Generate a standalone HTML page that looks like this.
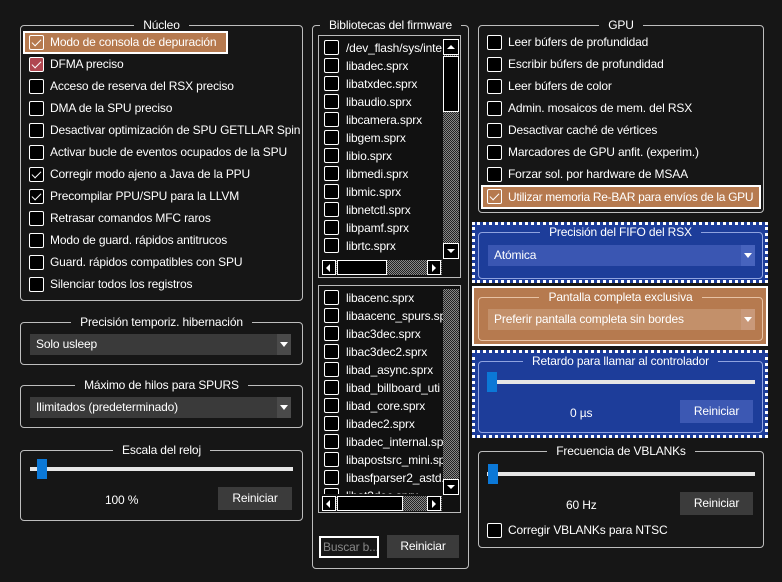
<!DOCTYPE html><html><head><meta charset="utf-8"><style>
*{box-sizing:border-box;margin:0;padding:0}
body{width:782px;height:582px;background:#161616;font-family:"Liberation Sans",sans-serif;font-size:12px;letter-spacing:-0.15px;color:#fff;position:relative;overflow:hidden}
.a{position:absolute}
.g{position:absolute;border:1px solid #bdbdbd;border-radius:4px}
.t{position:absolute;top:-10px;left:0;right:0;text-align:center;line-height:18px;white-space:nowrap}
.t span{background:#161616;padding:0 9px}
.cb{position:absolute;width:15px;height:15px;border:1px solid #fff;background:#000;border-radius:2px}
.lb{position:absolute;white-space:nowrap;line-height:18px}
.ck::after{content:"";position:absolute;left:4px;top:1px;width:4px;height:8px;border:solid #fff;border-width:0 1.5px 1.5px 0;transform:rotate(45deg)}
.combo{position:absolute;background:#3a3a3a;height:21px;line-height:21px;padding-left:6px;white-space:nowrap}
.combo i{position:absolute;right:0;top:0;width:14px;height:21px;background:#4a4a4a}
.combo i::after{content:"";position:absolute;left:3px;top:8px;border:4px solid transparent;border-top:5px solid #fff}
.btn{position:absolute;background:#3b3b3b;text-align:center;line-height:23px;height:23px}
.trk{position:absolute;height:4px;background:#e6e6e6}
.hd{position:absolute;width:10px;height:20px;background:#0b78d7}
.dot{position:absolute;border:3px dotted #fff}
.li{position:absolute;left:5px;height:18px;white-space:nowrap;line-height:18px}
.li b{display:inline-block;width:15px;height:15px;border:1px solid #fff;background:#000;vertical-align:-3px;margin-right:7px;border-radius:2px}
.chk{background:repeating-conic-gradient(#888 0 25%,#222 0 50%) 0 0/2px 2px}
.sb{position:absolute;background:#000;border:1px solid #fff}
</style></head><body>

<div class="g" style="left:20px;top:25px;width:283px;height:276px"><div class="t"><span>Núcleo</span></div></div>
<div class="a" style="left:23px;top:31px;width:205px;height:23px;background:#b67a4f;border:2px solid #fff"></div>
<div class="cb ck" style="left:29px;top:35px;background:#b67a4f"></div><div class="lb" style="left:50px;top:33px">Modo de consola de depuración</div>
<div class="cb ck" style="left:29px;top:57px;background:#b04650"></div><div class="lb" style="left:50px;top:55px">DFMA preciso</div>
<div class="cb" style="left:29px;top:79px"></div><div class="lb" style="left:50px;top:77px">Acceso de reserva del RSX preciso</div>
<div class="cb" style="left:29px;top:101px"></div><div class="lb" style="left:50px;top:99px">DMA de la SPU preciso</div>
<div class="cb" style="left:29px;top:123px"></div><div class="lb" style="left:50px;top:121px">Desactivar optimización de SPU GETLLAR Spin</div>
<div class="cb" style="left:29px;top:145px"></div><div class="lb" style="left:50px;top:143px">Activar bucle de eventos ocupados de la SPU</div>
<div class="cb ck" style="left:29px;top:167px"></div><div class="lb" style="left:50px;top:165px">Corregir modo ajeno a Java de la PPU</div>
<div class="cb ck" style="left:29px;top:189px"></div><div class="lb" style="left:50px;top:187px">Precompilar PPU/SPU para la LLVM</div>
<div class="cb" style="left:29px;top:211px"></div><div class="lb" style="left:50px;top:209px">Retrasar comandos MFC raros</div>
<div class="cb" style="left:29px;top:233px"></div><div class="lb" style="left:50px;top:231px">Modo de guard. rápidos antitrucos</div>
<div class="cb" style="left:29px;top:255px"></div><div class="lb" style="left:50px;top:253px">Guard. rápidos compatibles con SPU</div>
<div class="cb" style="left:29px;top:277px"></div><div class="lb" style="left:50px;top:275px">Silenciar todos los registros</div>

<div class="g" style="left:20px;top:322px;width:283px;height:43px"><div class="t"><span>Precisión temporiz. hibernación</span></div></div>
<div class="combo" style="left:30px;top:334px;width:261px">Solo usleep<i></i></div>
<div class="g" style="left:20px;top:385px;width:283px;height:43px"><div class="t"><span>Máximo de hilos para SPURS</span></div></div>
<div class="combo" style="left:30px;top:397px;width:261px">Ilimitados (predeterminado)<i></i></div>
<div class="g" style="left:20px;top:450px;width:283px;height:71px"><div class="t"><span>Escala del reloj</span></div></div>
<div class="trk" style="left:30px;top:467px;width:263px"></div><div class="hd" style="left:37px;top:459px"></div>
<div class="lb" style="left:105px;top:491px">100 %</div>
<div class="btn" style="left:218px;top:487px;width:74px">Reiniciar</div>

<div class="g" style="left:312px;top:25px;width:157px;height:544px"><div class="t"><span>Bibliotecas del firmware</span></div></div>
<div class="a" style="left:318px;top:35px;width:143px;height:243px;border:1px solid #bbb;background:#111;overflow:hidden">
<div class="li" style="top:3px"><b></b>/dev_flash/sys/inte</div>
<div class="li" style="top:21px"><b></b>libadec.sprx</div>
<div class="li" style="top:39px"><b></b>libatxdec.sprx</div>
<div class="li" style="top:57px"><b></b>libaudio.sprx</div>
<div class="li" style="top:75px"><b></b>libcamera.sprx</div>
<div class="li" style="top:93px"><b></b>libgem.sprx</div>
<div class="li" style="top:111px"><b></b>libio.sprx</div>
<div class="li" style="top:129px"><b></b>libmedi.sprx</div>
<div class="li" style="top:147px"><b></b>libmic.sprx</div>
<div class="li" style="top:165px"><b></b>libnetctl.sprx</div>
<div class="li" style="top:183px"><b></b>libpamf.sprx</div>
<div class="li" style="top:201px"><b></b>librtc.sprx</div>
<div class="a chk" style="left:124px;top:3px;width:16px;height:220px"></div>
<div class="sb" style="left:124px;top:3px;width:16px;height:16px"></div><div class="a" style="left:128px;top:9px;border:4px solid transparent;border-bottom:4px solid #fff;border-top:0"></div>
<div class="sb" style="left:124px;top:20px;width:16px;height:56px"></div>
<div class="sb" style="left:124px;top:207px;width:16px;height:16px"></div><div class="a" style="left:128px;top:213px;border:4px solid transparent;border-top:4px solid #fff;border-bottom:0"></div>
<div class="a" style="left:0;top:222px;width:124px;height:20px;background:#111"></div>
<div class="a chk" style="left:3px;top:224px;width:120px;height:15px"></div>
<div class="sb" style="left:3px;top:224px;width:14px;height:15px"></div><div class="a" style="left:7px;top:228px;border:4px solid transparent;border-right:4px solid #fff;border-left:0"></div>
<div class="sb" style="left:18px;top:224px;width:50px;height:15px"></div>
<div class="sb" style="left:108px;top:224px;width:14px;height:15px"></div><div class="a" style="left:113px;top:228px;border:4px solid transparent;border-left:4px solid #fff;border-right:0"></div>
</div>
<div class="a" style="left:318px;top:285px;width:143px;height:228px;border:1px solid #bbb;background:#111;overflow:hidden">
<div class="li" style="top:3px"><b></b>libacenc.sprx</div>
<div class="li" style="top:21px"><b></b>libaacenc_spurs.sp</div>
<div class="li" style="top:39px"><b></b>libac3dec.sprx</div>
<div class="li" style="top:57px"><b></b>libac3dec2.sprx</div>
<div class="li" style="top:75px"><b></b>libad_async.sprx</div>
<div class="li" style="top:93px"><b></b>libad_billboard_uti</div>
<div class="li" style="top:111px"><b></b>libad_core.sprx</div>
<div class="li" style="top:129px"><b></b>libadec2.sprx</div>
<div class="li" style="top:147px"><b></b>libadec_internal.sp</div>
<div class="li" style="top:165px"><b></b>libapostsrc_mini.sp</div>
<div class="li" style="top:183px"><b></b>libasfparser2_astd.</div>
<div class="li" style="top:201px"><b></b>libat3dec.sprx</div>
<div class="a chk" style="left:124px;top:3px;width:16px;height:206px"></div>
<div class="sb" style="left:124px;top:193px;width:16px;height:16px"></div><div class="a" style="left:128px;top:199px;border:4px solid transparent;border-top:4px solid #fff;border-bottom:0"></div>
<div class="a" style="left:0;top:208px;width:124px;height:20px;background:#111"></div>
<div class="a chk" style="left:3px;top:210px;width:120px;height:15px"></div>
<div class="sb" style="left:3px;top:210px;width:14px;height:15px"></div><div class="a" style="left:7px;top:214px;border:4px solid transparent;border-right:4px solid #fff;border-left:0"></div>
<div class="sb" style="left:18px;top:210px;width:66px;height:15px"></div>
<div class="sb" style="left:108px;top:210px;width:14px;height:15px"></div><div class="a" style="left:113px;top:214px;border:4px solid transparent;border-left:4px solid #fff;border-right:0"></div>
</div>
<div class="a" style="left:319px;top:536px;width:60px;height:22px;border:2px solid #fff;background:#161616;color:#888;line-height:18px;padding-left:2px;white-space:nowrap;overflow:hidden">Buscar b...</div>
<div class="btn" style="left:387px;top:535px;width:72px">Reiniciar</div>

<div class="g" style="left:478px;top:25px;width:286px;height:188px"><div class="t"><span>GPU</span></div></div>
<div class="cb" style="left:487px;top:35px"></div><div class="lb" style="left:508px;top:33px">Leer búfers de profundidad</div>
<div class="cb" style="left:487px;top:57px"></div><div class="lb" style="left:508px;top:55px">Escribir búfers de profundidad</div>
<div class="cb" style="left:487px;top:79px"></div><div class="lb" style="left:508px;top:77px">Leer búfers de color</div>
<div class="cb" style="left:487px;top:101px"></div><div class="lb" style="left:508px;top:99px">Admin. mosaicos de mem. del RSX</div>
<div class="cb" style="left:487px;top:123px"></div><div class="lb" style="left:508px;top:121px">Desactivar caché de vértices</div>
<div class="cb" style="left:487px;top:145px"></div><div class="lb" style="left:508px;top:143px">Marcadores de GPU anfit. (experim.)</div>
<div class="cb" style="left:487px;top:167px"></div><div class="lb" style="left:508px;top:165px">Forzar sol. por hardware de MSAA</div>
<div class="a" style="left:481px;top:185px;width:280px;height:24px;background:#b67a4f;border:2px solid #fff"></div>
<div class="cb ck" style="left:487px;top:189px;background:#b67a4f"></div><div class="lb" style="left:508px;top:188px;letter-spacing:-0.3px">Utilizar memoria Re-BAR para envíos de la GPU</div>

<div class="dot" style="left:472px;top:222px;width:296px;height:61px;background:#1d3d9a"></div>
<div class="g" style="left:478px;top:232px;width:285px;height:47px;border-color:#8fa3e0"><div class="t"><span style="background:#1d3d9a">Precisión del FIFO del RSX</span></div></div>
<div class="combo" style="left:488px;top:245px;width:267px;background:#3a56b2">Atómica<i style="background:#4763bd"></i></div>

<div class="a" style="left:472px;top:286px;width:296px;height:60px;background:#b67a4f;border:2px solid #fff"></div>
<div class="g" style="left:478px;top:297px;width:285px;height:44px;border-color:#e7c2a4"><div class="t"><span style="background:#b67a4f">Pantalla completa exclusiva</span></div></div>
<div class="combo" style="left:488px;top:309px;width:267px;background:#c3906a">Preferir pantalla completa sin bordes<i style="background:#c9997a"></i></div>

<div class="dot" style="left:472px;top:350px;width:296px;height:88px;background:#1d3d9a"></div>
<div class="g" style="left:478px;top:361px;width:285px;height:72px;border-color:#8fa3e0"><div class="t"><span style="background:#1d3d9a">Retardo para llamar al controlador</span></div></div>
<div class="trk" style="left:488px;top:380px;width:267px"></div><div class="hd" style="left:487px;top:372px"></div>
<div class="lb" style="left:570px;top:404px">0 µs</div>
<div class="btn" style="left:680px;top:400px;width:73px;background:#3c58b3">Reiniciar</div>

<div class="g" style="left:478px;top:451px;width:286px;height:97px"><div class="t"><span>Frecuencia de VBLANKs</span></div></div>
<div class="trk" style="left:487px;top:472px;width:268px"></div><div class="hd" style="left:488px;top:464px"></div>
<div class="lb" style="left:566px;top:496px">60 Hz</div>
<div class="btn" style="left:680px;top:492px;width:73px">Reiniciar</div>
<div class="cb" style="left:487px;top:523px"></div><div class="lb" style="left:508px;top:521px">Corregir VBLANKs para NTSC</div>
</body></html>
